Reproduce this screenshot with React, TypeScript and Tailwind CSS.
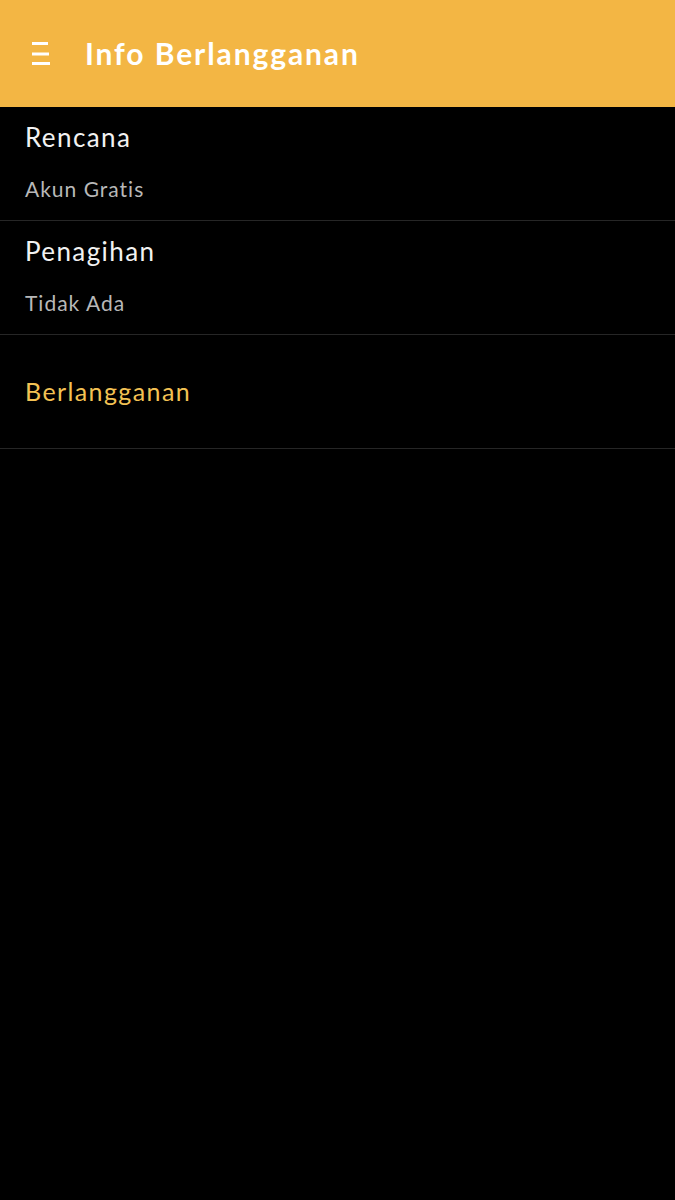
export default function App() {
  const rows = [
    { title: "Rencana", value: "Akun Gratis" },
    { title: "Penagihan", value: "Tidak Ada" },
  ]

  return (
    <div className="min-h-[1200px] w-full bg-black font-['Lato',_'Open_Sans',_sans-serif]">
      <header className="h-[107px] bg-[#f3b644] flex items-center pl-[32px]">
        <svg width="20" height="26" viewBox="0 0 20 26" className="shrink-0">
          <rect x="0" y="1" width="16" height="3" fill="#fff" />
          <rect x="0" y="11.5" width="17" height="3" fill="#fff" />
          <rect x="0" y="21" width="18" height="3" fill="#fff" />
        </svg>
        <h1 className="ml-[33px] text-[30px] font-bold text-white tracking-[1.9px]">
          Info Berlangganan
        </h1>
      </header>

      {rows.map((row) => (
        <div key={row.title} className="h-[114px] border-b border-[#262626] px-[25px] pt-[12px]">
          <div className="text-[26px] leading-[36px] text-[#f2f2f2] tracking-[1.4px]">{row.title}</div>
          <div className="mt-[20px] text-[21px] leading-[28px] text-[#b8b8b8] tracking-[1px]">{row.value}</div>
        </div>
      ))}

      <div className="h-[114px] border-b border-[#262626] px-[25px] flex items-center">
        <span className="text-[25px] text-[#f3c254] tracking-[1.4px]">Berlangganan</span>
      </div>
    </div>
  )
}
